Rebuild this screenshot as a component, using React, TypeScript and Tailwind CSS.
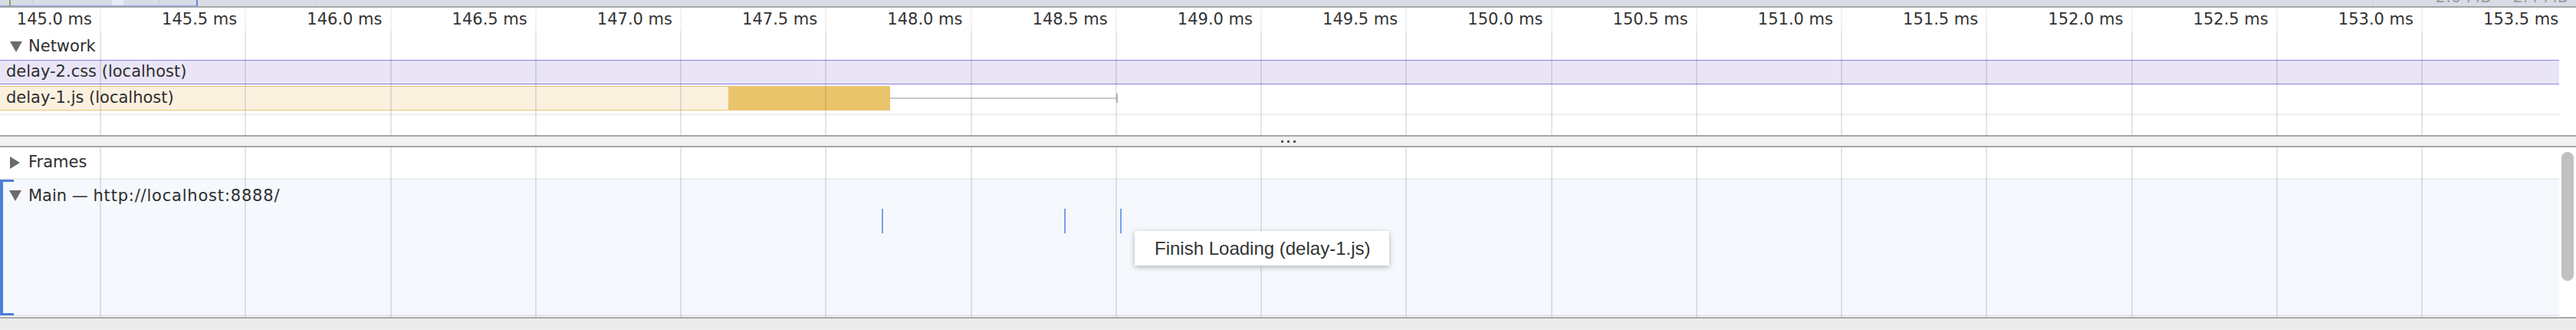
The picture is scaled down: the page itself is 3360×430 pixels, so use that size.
const labels = Array.from({ length: 18 }, (_, i) => (145 + i * 0.5).toFixed(1) + " ms");

// 17 gridlines, one every 0.5 ms, first at x=131
const GridLines = ({ className }: { className: string }) => (
  <div className="pointer-events-none absolute inset-0 z-10 flex">
    <div className="w-[130px] shrink-0" />
    {Array.from({ length: 16 }, (_, i) => (
      <div key={i} className={`w-[189.25px] shrink-0 border-l-2 ${className}`} />
    ))}
    <div className={`shrink-0 border-l-2 ${className}`} />
  </div>
);

const DownArrow = () => (
  <svg width="16" height="14" viewBox="0 0 16 14" className="shrink-0">
    <path d="M0 0 H16 L8 14 Z" fill="#6b6b6b" />
  </svg>
);

const RightArrow = () => (
  <svg width="13" height="16" viewBox="0 0 13 16" className="shrink-0">
    <path d="M0 0 L13 8 L0 16 Z" fill="#6b6b6b" />
  </svg>
);

const Overview = () => (
  <div className="relative h-[10px] overflow-hidden border-b-2 border-[#a7a7a7] bg-[#d9dce5]">
    <div className="flex h-full">
      <div className="h-full w-[12px] shrink-0 border-b border-[#8ea6ea]" />
      <div className="h-full w-[2px] shrink-0 bg-[#7ea86c]" />
      <div className="h-full w-[28px] shrink-0 border-b border-[#8ea6ea]" />
      <div className="h-full w-[104px] shrink-0 border-b border-l border-[#8ea6ea] border-l-[#cdd0d9]" />
      <div className="h-full w-[15px] shrink-0 border-b border-[#8ea6ea] bg-[#e8ebf7]" />
      <div className="h-full w-[46px] shrink-0 border-b border-[#8ea6ea]" />
      <div className="h-full w-[49px] shrink-0 border-b border-l border-[#8ea6ea] border-l-[#cdd0d9]" />
      <div className="h-full w-[2px] shrink-0 bg-[#6f80de]" />
      <div className="h-full w-[155px] shrink-0 border-r border-[#cdd0d9]" />
      <div className="flex-1" />
      <div className="h-full w-[265px] shrink-0 border-l border-[#cdd0d9]" />
    </div>
    <div className="absolute right-[10px] top-[-16px] flex gap-[28px] text-[21px] leading-[24px] text-[#9c9c9c]">
      <span>2.0 MB</span>
      <span>2.4 MB</span>
    </div>
  </div>
);

const Ruler = () => (
  <div className="relative h-[30px]">
    <div className="absolute inset-x-0 top-[2px] bottom-0">
      <GridLines className="border-black/5" />
    </div>
    <div className="flex whitespace-nowrap leading-[30px] text-[#333]">
      {labels.map((l, i) => (
        <div key={l} className={`shrink-0 text-right ${i === 0 ? "w-[120px]" : "w-[189.25px]"}`}>
          {l}
        </div>
      ))}
    </div>
  </div>
);

const NetworkPanel = () => (
  <div className="relative h-[136px]">
    <GridLines className="border-black/10" />
    <div className="flex h-[38px] items-center gap-[8px] pl-[13px] pt-[3px]">
      <DownArrow />
      <span>Network</span>
    </div>
    <div className="flex h-[32px] w-[3338px] items-center border-y border-[#8f7ee2] bg-[#e9e5f7] pl-[8px]">
      delay-2.css (localhost)
    </div>
    <div className="mt-[2px] flex h-[32px] w-[3338px]">
      <div className="flex w-[951px] shrink-0 items-center border border-l-0 border-[#e8c46c] bg-[#fbf1df] pl-[8px]">
        delay-1.js (localhost)
      </div>
      <div className="ml-[-1px] w-[211px] shrink-0 bg-[#e9c46a]" />
      <div className="flex w-[297px] shrink-0 items-center">
        <div className="h-[2px] flex-1 bg-[#c9c9c9]" />
        <div className="h-[12px] w-[2px] bg-[#b9b9b9]" />
      </div>
    </div>
    <div className="mt-[4px] h-[2px] w-[3338px] bg-[#efefef]" />
  </div>
);

const Divider = () => (
  <div className="flex h-[16px] items-center justify-center gap-[5px] border-y-2 border-[#a6a6a6] bg-[#f2f2f2]">
    <span className="h-[3px] w-[3px] bg-[#555]" />
    <span className="h-[3px] w-[3px] bg-[#555]" />
    <span className="h-[3px] w-[3px] bg-[#555]" />
  </div>
);

// event markers on the main thread track, x in px
const markers = [1150, 1388, 1461];

const LowerPanel = () => (
  <div className="relative flex h-[221px]">
    <GridLines className="border-black/10" />
    <div className="flex w-[3338px] shrink-0 flex-col">
      <div className="flex h-[42px] items-center gap-[11px] border-b-2 border-[#ededed] pl-[13px]">
        <RightArrow />
        <span>Frames</span>
      </div>
      <div className="relative h-[176px] border-l-[4px] border-l-[#4b7fd8] bg-[#f5f8fd] pl-[8px] pt-[9px]">
        <div className="absolute left-[-4px] top-0 h-[3px] w-[18px] bg-[#4b7fd8]" />
        <div className="absolute bottom-[-1px] left-[-4px] h-[3px] w-[18px] bg-[#4b7fd8]" />
        <div className="flex items-center gap-[9px] leading-[24px]">
          <DownArrow />
          <span>
            Main — <span className="tracking-[0.8px]">http://localhost:8888/</span>
          </span>
        </div>
        {markers.map((x) => (
          <div
            key={x}
            className="absolute top-[38px] h-[32px] w-[2px] bg-[#74a2ec]"
            style={{ left: x - 4 }}
          />
        ))}
        <div className="absolute left-[1476px] top-[67px] z-20 flex h-[45px] w-[332px] items-center bg-white pl-[26px] font-['Liberation_Sans',Arial,sans-serif] text-[24px] text-[#333] shadow-[0_2px_7px_rgba(0,0,0,0.28)]">
          Finish Loading (delay-1.js)
        </div>
      </div>
      <div className="h-[2px] bg-[#e6e6e6]" />
    </div>
    <div className="flex flex-1 justify-center pt-[6px]">
      <div className="z-20 h-[168px] w-[16px] rounded-full bg-[#c1c1c1]" />
    </div>
  </div>
);

export default function App() {
  return (
    <div className="h-[430px] w-[3360px] overflow-hidden bg-white font-['DejaVu_Sans',Verdana,sans-serif] text-[21px] text-[#2e2e2e]">
      <Overview />
      <Ruler />
      <NetworkPanel />
      <Divider />
      <LowerPanel />
      <div className="h-[17px] border-t-2 border-[#a8a8a8] bg-[#ececec]" />
    </div>
  );
}
